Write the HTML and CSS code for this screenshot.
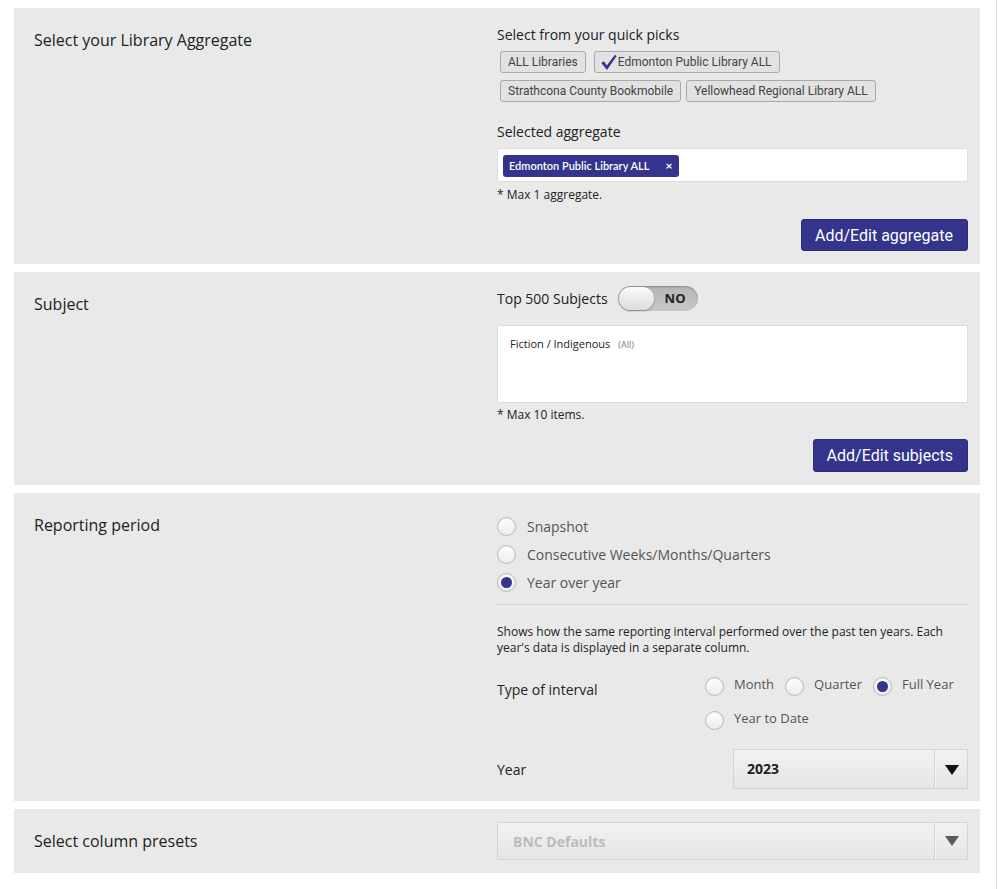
FILE: index.html
```html
<!DOCTYPE html>
<html lang="en">
<head>
<meta charset="utf-8">
<title>Report settings</title>
<link rel="stylesheet" href="styles.css">
</head>
<body>
<div class="page">

  <section class="panel">
    <div class="panel-label">Select your Library Aggregate</div>
    <div class="panel-body">
      <div class="field-title first">Select from your quick picks</div>
      <div class="picks">
        <div class="pick-row">
          <button class="pick">ALL Libraries</button>
          <button class="pick"><svg class="tick" viewBox="0 0 20 20" width="19" height="19"><path d="M2.5 10.5 L5.2 8.6 L8.2 13.2 L16.8 1.8 L18.6 3.2 L8.4 18 Z" fill="#33338c"/></svg>Edmonton Public Library ALL</button>
        </div>
        <div class="pick-row narrow">
          <button class="pick">Strathcona County Bookmobile</button>
          <button class="pick">Yellowhead Regional Library ALL</button>
        </div>
      </div>
      <div class="field-title">Selected aggregate</div>
      <div class="chip-box">
        <span class="chip">Edmonton Public Library ALL<span class="chip-x">×</span></span>
      </div>
      <div class="note">* Max 1 aggregate.</div>
      <div class="actions"><button class="primary">Add/Edit aggregate</button></div>
    </div>
  </section>

  <section class="panel">
    <div class="panel-label">Subject</div>
    <div class="panel-body">
      <div class="toggle-row">
        <span class="toggle-label">Top 500 Subjects</span>
        <span class="toggle"><span class="knob"></span><span class="toggle-text">NO</span></span>
      </div>
      <div class="subject-box">
        <span class="subject">Fiction / Indigenous</span><span class="subject-scope">(All)</span>
      </div>
      <div class="note tight">* Max 10 items.</div>
      <div class="actions subject-actions"><button class="primary">Add/Edit subjects</button></div>
    </div>
  </section>

  <section class="panel period">
    <div class="panel-label">Reporting period</div>
    <div class="panel-body">
      <div class="radio-list">
        <label class="radio-row"><span class="radio"></span>Snapshot</label>
        <label class="radio-row"><span class="radio"></span>Consecutive Weeks/Months/Quarters</label>
        <label class="radio-row"><span class="radio on"></span>Year over year</label>
      </div>
      <div class="separator"></div>
      <p class="desc">Shows how the same reporting interval performed over the past ten years. Each year's data is displayed in a separate column.</p>
      <div class="interval-row">
        <div class="sub-label">Type of interval</div>
        <div class="interval-options">
          <label class="opt"><span class="radio"></span>Month</label>
          <label class="opt"><span class="radio"></span>Quarter</label>
          <label class="opt"><span class="radio on"></span>Full Year</label>
          <label class="opt"><span class="radio"></span>Year to Date</label>
        </div>
      </div>
      <div class="year-row">
        <div class="sub-label">Year</div>
        <div class="select year-select">
          <span class="select-value">2023</span>
          <span class="select-arrow"></span>
        </div>
      </div>
    </div>
  </section>

  <section class="panel presets">
    <div class="panel-label">Select column presets</div>
    <div class="panel-body">
      <div class="select disabled">
        <span class="select-value">BNC Defaults</span>
        <span class="select-arrow"></span>
      </div>
    </div>
  </section>

</div>
</body>
</html>
```
FILE: styles.css
```css
* { box-sizing: border-box; }

html, body {
  margin: 0;
  background: #fff;
}

body {
  font-family: "Open Sans", "Noto Sans", sans-serif;
  color: #222;
}

.page {
  width: 997px;
  min-height: 889px;
  padding: 8px 16px 8px 14px;
  border-right: 1px solid #dcdcdc;
  display: flex;
  flex-direction: column;
  gap: 8px;
}

/* ---- panels ---- */
.panel {
  background: #e9e9e9;
  display: grid;
  grid-template-columns: 463px 471px;
  padding: 14px 12px 13px 20px;
}

.panel.period { padding-bottom: 12px; }

.panel-label {
  font-size: 16px;
  line-height: 22px;
  margin-top: 7px;
  color: #222;
}

.panel-body {
  display: flex;
  flex-direction: column;
}

.field-title {
  font-size: 14px;
  line-height: 20px;
  margin-top: 20px;
}
.field-title.first { margin-top: 3px; }

/* ---- quick picks ---- */
.picks {
  display: flex;
  flex-direction: column;
  gap: 7px;
  margin-top: 6px;
  padding-left: 3px;
}

.pick-row {
  display: flex;
  gap: 8px;
}
.pick-row.narrow { gap: 5px; }

.pick {
  height: 22px;
  padding: 0 7px;
  display: inline-flex;
  align-items: center;
  font-family: Roboto, "Liberation Sans", sans-serif;
  font-size: 12px;
  color: #444;
  background: #e2e2e2;
  border: 1px solid #a9a9a9;
  border-radius: 3px;
}

.tick {
  margin: 0 0 0 -3px;
}

/* ---- selected aggregate ---- */
.chip-box {
  margin-top: 6px;
  height: 34px;
  background: #fff;
  border: 1px solid #dedede;
  padding: 4px 5px;
}

.chip {
  display: inline-flex;
  align-items: center;
  height: 22px;
  padding: 0 7px 0 6px;
  background: #34348c;
  color: #fff;
  border-radius: 3px;
  font-family: Lato, "Open Sans", sans-serif;
  font-size: 11px;
  font-weight: 600;
}

.chip-x {
  margin-left: 16px;
  font-size: 12px;
  font-weight: 700;
}

.note {
  font-size: 12px;
  line-height: 16px;
  margin-top: 5px;
  color: #222;
}
.note.tight { margin-top: 4px; }

.actions {
  display: flex;
  justify-content: flex-end;
  margin-top: 16px;
}

.primary {
  height: 32px;
  padding: 0 14px 0 13px;
  background: #34348c;
  color: #fff;
  border: 1px solid #2c2c7a;
  border-radius: 3px;
  font-family: Roboto, "Liberation Sans", sans-serif;
  font-size: 16px;
}

.subject-actions .primary { height: 33px; }

/* ---- toggle ---- */
.toggle-row {
  display: flex;
  align-items: center;
  height: 25px;
}

.toggle-label {
  font-size: 14px;
  margin-right: 10px;
}

.toggle {
  position: relative;
  width: 80px;
  height: 25px;
  border-radius: 13px;
  background: linear-gradient(#b5b5b5, #c8c8c8);
  box-shadow: inset 0 1px 2px rgba(0,0,0,.25);
}

.knob {
  position: absolute;
  left: 1px;
  top: 1px;
  width: 35px;
  height: 23px;
  border-radius: 12px;
  background: linear-gradient(#fbfbfb, #dcdcdc);
  box-shadow: 0 1px 2px rgba(0,0,0,.35);
}

.toggle-text {
  position: absolute;
  left: 35px;
  right: 0;
  top: 0;
  line-height: 25px;
  text-align: center;
  font-size: 13px;
  font-weight: 700;
  color: #222;
}

/* ---- subjects ---- */
.subject-box {
  margin-top: 14px;
  height: 78px;
  background: #fff;
  border: 1px solid #dedede;
  padding: 10px 12px;
  font-size: 11px;
  line-height: 16px;
}

.subject { color: #222; }
.subject-scope {
  margin-left: 8px;
  font-size: 9px;
  color: #777;
}

/* ---- radios ---- */
.radio-list {
  margin-top: 5px;
  display: flex;
  flex-direction: column;
}

.radio-row {
  height: 28px;
  display: flex;
  align-items: center;
  font-size: 14px;
  color: #555;
}

.radio {
  flex: none;
  width: 19px;
  height: 19px;
  border-radius: 50%;
  border: 1px solid #b9b9b9;
  background: linear-gradient(#fff, #ececec);
  box-shadow: inset 0 1px 1px rgba(0,0,0,.08);
  position: relative;
}

.radio.on::after {
  content: "";
  position: absolute;
  left: 3px;
  top: 3px;
  width: 11px;
  height: 11px;
  border-radius: 50%;
  background: #34348c;
}

.radio-row .radio {
  margin-right: 11px;
}

.separator {
  margin-top: 8px;
  border-top: 1px dotted #c4c4c4;
}

.desc {
  margin: 19px 0 0;
  font-size: 12px;
  line-height: 16px;
  color: #222;
}

.interval-row {
  display: flex;
  margin-top: 20px;
}

.sub-label {
  width: 208px;
  font-size: 14px;
  line-height: 22px;
  color: #222;
}

.interval-row .sub-label {
  margin-top: 3px;
}

.interval-options {
  display: flex;
  flex-wrap: wrap;
  gap: 14px 0;
  width: 263px;
}

.opt {
  display: flex;
  align-items: flex-start;
  height: 20px;
  font-size: 13px;
  line-height: 16px;
  color: #555;
  margin-right: 11px;
}

.opt .radio {
  margin: 1px 10px 0 0;
}

.year-row {
  display: flex;
  align-items: center;
  justify-content: space-between;
  margin-top: 19px;
}

.year-row .sub-label {
  margin-top: 2px;
}

/* ---- select ---- */
.select {
  display: flex;
  height: 40px;
  border: 1px solid #d4d4d4;
  background: linear-gradient(#f2f2f2, #e5e5e5);
}

.year-select {
  width: 235px;
}

.select-value {
  flex: 1;
  padding-left: 13px;
  line-height: 38px;
  font-size: 14px;
  font-weight: 700;
  color: #222;
}

.select-arrow {
  width: 33px;
  border-left: 1px solid #d0d0d0;
  box-shadow: inset 1px 0 0 #f6f6f6;
  position: relative;
}

.select-arrow::after {
  content: "";
  position: absolute;
  left: 10px;
  top: 15px;
  border-left: 7px solid transparent;
  border-right: 7px solid transparent;
  border-top: 10px solid #111;
}

.presets {
  padding-top: 13px;
}

.presets .panel-label {
  margin-top: 8px;
}

.select.disabled {
  height: 38px;
}

.select.disabled .select-value {
  color: #bcbcbc;
  padding-left: 15px;
  line-height: 37px;
}

.select.disabled .select-arrow::after {
  border-top-color: #5a5a5a;
  top: 13px;
}
```
